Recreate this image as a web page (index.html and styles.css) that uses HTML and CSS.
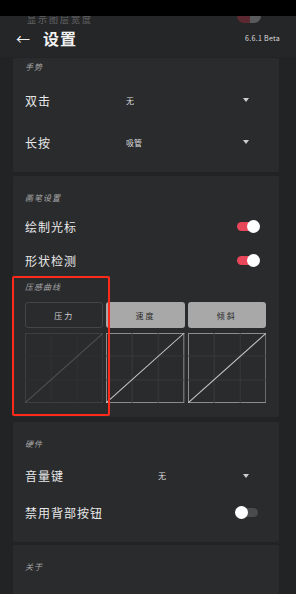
FILE: index.html
```html
<!DOCTYPE html>
<html lang="zh">
<head>
	<meta charset="UTF-8">
	<title>设置</title>
	<link rel="stylesheet" href="styles.css">
</head>
<body>
	<div class="statusbar"></div>
	<div class="header">
		<div class="ghost">
			<span class="ghost-text">显示图层宽度</span>
			<span class="ghost-switch"></span>
		</div>
		<div class="bar">
			<span class="back">&larr;</span>
			<span class="title">设置</span>
			<span class="version">6.6.1 Beta</span>
		</div>
	</div>

	<div class="page">
		<div class="card card-first">
			<div class="card-title">手势</div>
			<div class="row row-tall">
				<span class="label">双击</span>
				<span class="value">无</span>
				<span class="caret"></span>
			</div>
			<div class="row row-tall">
				<span class="label">长按</span>
				<span class="value">吸管</span>
				<span class="caret"></span>
			</div>
		</div>

		<div class="card card-brush">
			<div class="card-title">画笔设置</div>
			<div class="row">
				<span class="label">绘制光标</span>
				<span class="switch on"></span>
			</div>
			<div class="row">
				<span class="label">形状检测</span>
				<span class="switch on"></span>
			</div>
			<div class="card-title sub">压感曲线</div>
			<div class="tabs">
				<div class="tab active">压力</div>
				<div class="tab">速度</div>
				<div class="tab">倾斜</div>
			</div>
			<div class="curves">
				<svg class="curve dim" viewBox="0 0 78 70" preserveAspectRatio="none">
					<rect x="0.5" y="0.5" width="77" height="69" class="frame"/>
					<path d="M26 0V70M52 0V70M0 23H78M0 47H78" class="grid"/>
					<path d="M0 70L78 0" class="line"/>
				</svg>
				<svg class="curve" viewBox="0 0 78 70" preserveAspectRatio="none">
					<rect x="0.5" y="0.5" width="77" height="69" class="frame"/>
					<path d="M26 0V70M52 0V70M0 23H78M0 47H78" class="grid"/>
					<path d="M0 70L78 0" class="line"/>
				</svg>
				<svg class="curve" viewBox="0 0 78 70" preserveAspectRatio="none">
					<rect x="0.5" y="0.5" width="77" height="69" class="frame"/>
					<path d="M26 0V70M52 0V70M0 23H78M0 47H78" class="grid"/>
					<path d="M0 70L78 0" class="line"/>
				</svg>
			</div>
			<div class="mark"></div>
		</div>

		<div class="card card-hw">
			<div class="card-title">硬件</div>
			<div class="row row-mid">
				<span class="label">音量键</span>
				<span class="value">无</span>
				<span class="caret"></span>
			</div>
			<div class="row row-mid">
				<span class="label">禁用背部按钮</span>
				<span class="switch"></span>
			</div>
		</div>

		<div class="card card-about">
			<div class="card-title">关于</div>
			<div class="link">访问官网</div>
		</div>
	</div>
</body>
</html>
```

FILE: styles.css
```css
* {
	margin: 0;
	padding: 0;
	box-sizing: border-box;
}
html, body {
	width: 296px;
	height: 594px;
	overflow: hidden;
}
body {
	background: #222325;
	font-family: "Noto Sans CJK SC", "Noto Sans", sans-serif;
	color: #e4e4e4;
}
.statusbar {
	height: 16px;
	background: #000;
}
.header {
	height: 41px;
	background: #252628;
}
/* row scrolled under the header, only its lower half shows */
.ghost {
	height: 10px;
	overflow: hidden;
	display: flex;
	justify-content: space-between;
	padding: 0 35px 0 27px;
	opacity: 0.35;
}
.ghost-text {
	font-size: 9px;
	line-height: 10px;
	margin-top: -1px;
	letter-spacing: 2px;
	color: #ccc;
}
.ghost-switch {
	width: 24px;
	height: 14px;
	margin-top: -7px;
	border-radius: 7px;
	background: linear-gradient(90deg, #c0303c 55%, #bbb 55%);
}
.bar {
	display: flex;
	align-items: center;
	height: 23px;
	padding: 0 16px;
}
.back {
	font-size: 14px;
	color: #eee;
	width: 27px;
}
.title {
	font-size: 16px;
	font-weight: bold;
	letter-spacing: 1px;
	color: #f2f2f2;
}
.version {
	margin-left: auto;
	font-size: 7px;
	color: #ddd;
	letter-spacing: 0.3px;
}
.page {
	display: flex;
	flex-direction: column;
	gap: 4px;
	padding: 1px 17px 0 13px;
}
.card {
	background: #2a2b2d;
	border-radius: 2px;
	padding: 15px 18px 9px 12px;
	position: relative;
}
.card-title {
	font-size: 8px;
	line-height: 14px;
	font-style: italic;
	color: #a9a9a9;
	letter-spacing: 1px;
}
.row {
	display: flex;
	align-items: center;
	height: 34px;
}
.label {
	font-size: 12px;
	letter-spacing: 1px;
	color: #e8e8e8;
}
.value {
	font-size: 8px;
	color: #dcdcdc;
}
.caret {
	margin-left: auto;
	margin-right: 12px;
	width: 0;
	height: 0;
	border-left: 3.5px solid transparent;
	border-right: 3.5px solid transparent;
	border-top: 4px solid #cfcfcf;
}

/* gestures */
.card-first {
	padding-top: 2px;
}
.card-first .card-title {
	margin-bottom: 5px;
}
.row-tall {
	height: 42px;
}
.row-tall .label {
	width: 101px;
}

/* brush */
.card-brush {
	padding-bottom: 14px;
}
.card-brush .card-title {
	margin-bottom: 4px;
}
.card-brush .card-title.sub {
	margin-top: 3px;
	margin-bottom: 8px;
}
.switch {
	margin-left: auto;
	margin-right: 1px;
	position: relative;
	width: 23px;
	height: 13px;
	display: flex;
	align-items: center;
}
.switch::before {
	content: "";
	width: 21px;
	height: 9px;
	border-radius: 5px;
	background: #4a4b4d;
}
.switch::after {
	content: "";
	position: absolute;
	left: -2px;
	top: 0;
	width: 13px;
	height: 13px;
	border-radius: 50%;
	background: #fff;
}
.switch.on::before {
	background: #e8475a;
}
.switch.on::after {
	left: auto;
	right: 0;
}
.tabs, .curves {
	display: grid;
	grid-template-columns: repeat(3, 1fr);
	gap: 3px;
	margin-right: -5px;
}
.tab {
	height: 26px;
	border-radius: 3px;
	background: #a8a8a8;
	color: #2a2a2a;
	font-size: 8px;
	letter-spacing: 2px;
	display: flex;
	align-items: center;
	justify-content: center;
}
.tab.active {
	background: #2a2b2d;
	border: 1px solid #444547;
	color: #cfcfcf;
}
.curves {
	margin-top: 5px;
}
.curve {
	display: block;
	width: 100%;
	height: 70px;
}
.curve .frame {
	fill: none;
	stroke: #8c8c8c;
	stroke-width: 1;
}
.curve .grid {
	fill: none;
	stroke: #3c3d3f;
	stroke-width: 0.8;
}
.curve .line {
	stroke: #c4c4c4;
	stroke-width: 1;
}
.curve.dim .frame {
	stroke: #3e3f41;
}
.curve.dim .grid {
	stroke: #323335;
}
.curve.dim .line {
	stroke: #505153;
}
/* red annotation box over the pressure column */
.mark {
	position: absolute;
	left: -1px;
	top: 100px;
	width: 98px;
	height: 140px;
	border: 2px solid #ff2a1a;
	border-radius: 2px;
}

/* hardware */
.card-hw {
	margin-top: 1px;
	padding-bottom: 11px;
}
.card-hw .card-title {
	margin-bottom: 6px;
}
.row-mid {
	height: 37px;
}
.row-mid .label {
	width: 133px;
}

/* about */
.card-about {
	height: 60px;
	margin-top: -1px;
}
.link {
	margin-top: 17px;
	margin-left: 95px;
	font-size: 12px;
	color: #3db7d8;
	letter-spacing: 2px;
}
```
